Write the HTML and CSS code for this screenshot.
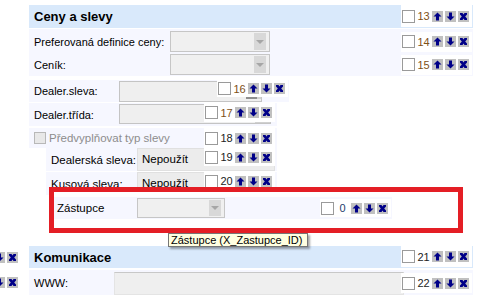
FILE: index.html
```html
<!DOCTYPE html>
<html lang="cs">
<head>
    <meta charset="UTF-8">
    <meta name="viewport" content="width=device-width, initial-scale=1.0">
    <title>Ceny a slevy</title>
    <link rel="stylesheet" href="styles.css">
</head>
<body>
    <svg class="defs" aria-hidden="true">
        <symbol id="i-up" viewBox="0 0 11 11"><path d="M5.5 1.5L9.5 5.5H7V9.5H4V5.5H1.5Z"/></symbol>
        <symbol id="i-down" viewBox="0 0 11 11"><path d="M5.5 9.5L9.5 5.5H7V1.5H4V5.5H1.5Z"/></symbol>
        <symbol id="i-del" viewBox="0 0 11 11"><path d="M2 2H4.5L5.5 3.5L6.5 2H9V3.5L7.2 5.5L9 7.5V9H6.5L5.5 7.5L4.5 9H2V7.5L3.8 5.5L2 3.5Z"/></symbol>
    </svg>

    <div class="page">
        <div class="head">
            <span class="title">Ceny a slevy</span>
            <div class="ctl"><span class="cb"></span><span class="num o">13</span><span class="btns"><span class="btn"><svg><use href="#i-up"/></svg></span><span class="btn"><svg><use href="#i-down"/></svg></span><span class="btn"><svg><use href="#i-del"/></svg></span></span></div>
        </div>

        <div class="grp">
            <div class="row">
                <span class="lbl w141">Preferovaná definice ceny:</span>
                <div class="sel w100"><span class="dd"></span></div>
                <div class="ctl"><span class="cb"></span><span class="num o">14</span><span class="btns"><span class="btn"><svg><use href="#i-up"/></svg></span><span class="btn"><svg><use href="#i-down"/></svg></span><span class="btn"><svg><use href="#i-del"/></svg></span></span></div>
            </div>
            <div class="row">
                <span class="lbl w141">Ceník:</span>
                <div class="sel w100"><span class="dd"></span></div>
                <div class="ctl"><span class="cb"></span><span class="num o">15</span><span class="btns"><span class="btn"><svg><use href="#i-up"/></svg></span><span class="btn"><svg><use href="#i-down"/></svg></span><span class="btn"><svg><use href="#i-del"/></svg></span></span></div>
            </div>
        </div>

        <div class="row pane r16">
            <span class="lbl w90">Dealer.sleva:</span>
            <div class="inp"></div>
            <div class="ctl"><span class="cb"></span><span class="num o">16</span><span class="btns"><span class="btn"><svg><use href="#i-up"/></svg></span><span class="btn"><svg><use href="#i-down"/></svg></span><span class="btn"><svg><use href="#i-del"/></svg></span></span></div>
        </div>

        <div class="row pane r17">
            <span class="lbl w90">Dealer.třída:</span>
            <div class="inp"></div>
            <div class="ctl"><span class="cb"></span><span class="num o">17</span><span class="btns"><span class="btn"><svg><use href="#i-up"/></svg></span><span class="btn"><svg><use href="#i-down"/></svg></span><span class="btn"><svg><use href="#i-del"/></svg></span></span></div>
        </div>

        <div class="row pane r18">
            <span class="dcb"></span>
            <span class="dis">Předvyplňovat typ slevy</span>
            <div class="ctl"><span class="cb"></span><span class="num">18</span><span class="btns"><span class="btn"><svg><use href="#i-up"/></svg></span><span class="btn"><svg><use href="#i-down"/></svg></span><span class="btn"><svg><use href="#i-del"/></svg></span></span></div>
        </div>

        <div class="row pane sub">
            <span class="lbl w91">Dealerská sleva:</span>
            <div class="np">Nepoužít</div>
            <div class="ctl"><span class="cb"></span><span class="num">19</span><span class="btns"><span class="btn"><svg><use href="#i-up"/></svg></span><span class="btn"><svg><use href="#i-down"/></svg></span><span class="btn"><svg><use href="#i-del"/></svg></span></span></div>
        </div>

        <div class="row pane sub r20">
            <span class="lbl w91">Kusová sleva:</span>
            <div class="np">Nepoužít</div>
            <div class="ctl"><span class="cb"></span><span class="num">20</span><span class="btns"><span class="btn"><svg><use href="#i-up"/></svg></span><span class="btn"><svg><use href="#i-down"/></svg></span><span class="btn"><svg><use href="#i-del"/></svg></span></span></div>
        </div>

        <div class="mark">
            <div class="row zrow">
                <span class="lbl w83">Zástupce</span>
                <div class="sel w88"><span class="dd"></span></div>
                <div class="ctl"><span class="cb"></span><span class="num zero">0</span><span class="btns"><span class="btn"><svg><use href="#i-up"/></svg></span><span class="btn"><svg><use href="#i-down"/></svg></span><span class="btn"><svg><use href="#i-del"/></svg></span></span></div>
            </div>
        </div>

        <div class="tip">Zástupce (X_Zastupce_ID)</div>

        <div class="lane l-kom">
            <div class="ctl edge"><span class="cb"></span><span class="num"></span><span class="btns"><span class="btn"><svg><use href="#i-up"/></svg></span><span class="btn"><svg><use href="#i-down"/></svg></span><span class="btn"><svg><use href="#i-del"/></svg></span></span></div>
            <div class="head h22">
                <span class="title">Komunikace</span>
                <div class="ctl"><span class="cb"></span><span class="num">21</span><span class="btns"><span class="btn"><svg><use href="#i-up"/></svg></span><span class="btn"><svg><use href="#i-down"/></svg></span><span class="btn"><svg><use href="#i-del"/></svg></span></span></div>
            </div>
        </div>

        <div class="lane l-www">
            <div class="ctl edge"><span class="cb"></span><span class="num"></span><span class="btns"><span class="btn"><svg><use href="#i-up"/></svg></span><span class="btn"><svg><use href="#i-down"/></svg></span><span class="btn"><svg><use href="#i-del"/></svg></span></span></div>
            <div class="row pane www">
                <span class="lbl w85">WWW:</span>
                <div class="inp"></div>
                <div class="ctl"><span class="cb"></span><span class="num">22</span><span class="btns"><span class="btn"><svg><use href="#i-up"/></svg></span><span class="btn"><svg><use href="#i-down"/></svg></span><span class="btn"><svg><use href="#i-del"/></svg></span></span></div>
            </div>
        </div>
    </div>
</body>
</html>
```

FILE: styles.css
```css
body {
    margin: 0;
    font-family: "Liberation Sans", Arial, sans-serif;
    font-size: 11px;
    color: #000;
    background: #fff;
}
.defs { position: absolute; width: 0; height: 0; }
.page {
    position: relative;
    width: 495px;
    height: 295px;
    overflow: hidden;
    padding-top: 5px;
    box-sizing: border-box;
}

/* section header */
.head {
    display: flex;
    align-items: center;
    margin-left: 29px;
    width: 444px;
    height: 23px;
    background: #d9e9fb;
    flex: none;
}
.head.h22 { height: 22px; }
.title { padding-left: 5px; font-size: 13px; font-weight: bold; }
.head .ctl { margin-left: auto; margin-right: 1px; align-self: flex-start; height: 22px; }
.head.h22 .ctl { height: 21px; }

/* field tools: checkbox, order number, move / delete */
.ctl {
    position: relative;
    display: flex;
    align-items: center;
    height: 20px;
    padding: 0 3px 0 1px;
    background: #fff;
    flex: none;
}
.cb { width: 13px; height: 13px; box-sizing: border-box; border: 1px solid #9a9a9a; background: #fff; flex: none; }
.num { width: 17px; text-align: center; color: #222; }
.num.o { color: #7e5016; }
.num.zero { color: #24406e; }
.btns { display: flex; gap: 2px; }
.btn { width: 11px; height: 11px; background: #c0c0c0; }
.btn svg { display: block; width: 11px; height: 11px; fill: #000088; }

/* rows */
.grp { margin: 1px 0 0 29px; width: 444px; padding-top: 1px; background: #f6f7ff; }
.grp .ctl { margin-left: auto; margin-right: 1px; }
.row { display: flex; align-items: center; height: 23px; }
.pane { margin-left: 29px; background: #f6f7ff; }
.lbl { box-sizing: border-box; padding-left: 5px; flex: none; white-space: nowrap; }
.w141 { width: 141px; }
.w90 { width: 90px; }
.w91 { width: 91px; }
.w85 { width: 85px; }
.w83 { width: 83px; padding-left: 3px; font-size: 11.5px; }

.sel {
    display: flex;
    justify-content: flex-end;
    box-sizing: border-box;
    height: 21px;
    padding: 1px 3px 1px 1px;
    border: 1px solid #c6c6c6;
    background: #f0f0f0;
    flex: none;
}
.w100 { width: 100px; }
.w88 { width: 88px; height: 20px; }
.dd { width: 12px; background: #d8d8d8; display: flex; align-items: center; justify-content: center; }
.dd::after {
    content: "";
    border-left: 4px solid transparent;
    border-right: 4px solid transparent;
    border-top: 4px solid #a6a6a6;
}

.inp {
    position: relative;
    box-sizing: border-box;
    border: 1px solid #c4c4c4;
    background: #efefef;
    flex: none;
}
.inp::after {
    content: "";
    position: absolute;
    right: 0;
    bottom: 0;
    width: 15px;
    height: 2px;
    background: #d0d0d0;
}

.r16 { margin-top: 4px; width: 260px; height: 22px; align-items: flex-start; }
.r16 .lbl { align-self: center; }
.r16 .inp { width: 143px; height: 21px; margin-top: 1px; }
.r16 .inp::after { bottom: 2px; background: linear-gradient(to right, #8e8e8e 11px, #d0d0d0 11px); }
.r16 .ctl { margin-left: -45px; height: 17px; }

.r17 { margin-top: 1px; width: 248px; align-items: flex-start; }
.r17 .lbl { align-self: center; }
.r17 .inp { width: 152px; height: 20px; margin-top: 1px; }
.r17 .ctl { margin-left: -67px; height: 19px; }

.r18 { margin-top: 2px; width: 248px; height: 20px; }
.dcb { width: 12px; height: 12px; margin-left: 5px; box-sizing: border-box; border: 1px solid #b8b8b8; background: #e8e8e8; flex: none; }
.dis { margin-left: 3px; color: #8d8d8d; font-size: 11.5px; white-space: nowrap; }
.r18 .ctl { margin-left: auto; margin-right: 2px; }

.sub { margin-left: 46px; width: 231px; align-items: flex-start; }
.sub .lbl { align-self: center; font-size: 11.5px; }
.r20 { margin-top: 1px; }
.np {
    width: 138px;
    height: 23px;
    box-sizing: border-box;
    padding-left: 4px;
    border: 1px solid #e0e0e0;
    background: #ececec;
    font-size: 11.5px;
    line-height: 21px;
    flex: none;
}
.sub .ctl { margin-left: -71px; height: 18px; }

/* highlighted field */
.mark {
    position: relative;
    margin: -8px 0 0 49px;
    width: 414px;
    height: 46px;
    box-sizing: border-box;
    padding-top: 5px;
    border: 5px solid #e41e25;
    background: #fff;
}
.zrow { width: 338px; height: 22px; background: #f6f7ff; }
.zrow .ctl { margin-left: auto; margin-right: 1px; height: 18px; }

.tip {
    position: absolute;
    left: 168px;
    top: 233px;
    height: 14px;
    box-sizing: border-box;
    padding: 0 5px 0 2px;
    border: 1px solid #767676;
    background: #ffffe1;
    font-size: 11px;
    line-height: 12px;
    white-space: nowrap;
    box-shadow: 2px 2px 2px rgba(0, 0, 0, 0.35);
    z-index: 2;
}

/* second section */
.lane { display: flex; }
.l-kom { margin-top: 13px; }
.l-www { margin-top: 2px; }
.edge { margin-left: -50px; height: 16px; }
.l-kom .edge { align-self: center; }
.l-www .edge { align-self: flex-start; margin-top: 4px; }
.lane .head, .lane .pane { margin-left: 8px; }
.www { width: 444px; height: 25px; align-items: flex-start; }
.www .lbl { align-self: center; }
.www .inp { width: 290px; height: 23px; margin-top: 2px; border-color: #c8c8c8 #e4e4e4 #e4e4e4 #e4e4e4; }
.www .inp::after { display: none; }
.www .ctl { margin-left: -3px; margin-top: 3px; }
```
